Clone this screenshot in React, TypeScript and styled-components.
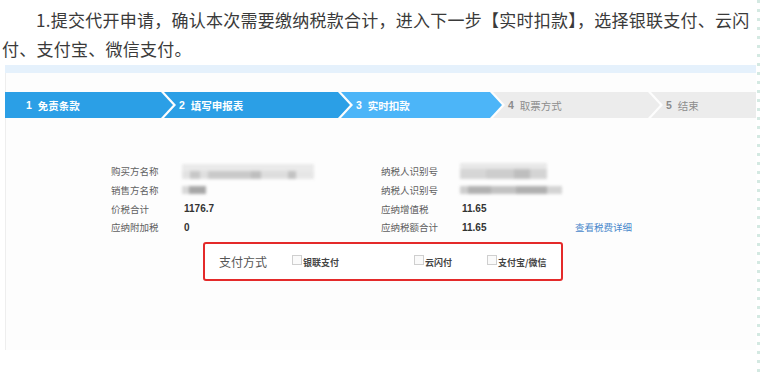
import styled, { createGlobalStyle } from "styled-components";

const GlobalStyle = createGlobalStyle`
  html, body {
    margin: 0;
    padding: 0;
    background: #fff;
  }
  body {
    font-family: "Noto Sans CJK SC", "Noto Sans", sans-serif;
  }
`;

type StepState = "done" | "current" | "todo";

const steps: { no: number; label: string; state: StepState; width?: number }[] = [
  { no: 1, label: "免责条款", state: "done", width: 168 },
  { no: 2, label: "填写申报表", state: "done", width: 186 },
  { no: 3, label: "实时扣款", state: "current", width: 161 },
  { no: 4, label: "取票方式", state: "todo", width: 167 },
  { no: 5, label: "结束", state: "todo" },
];

const App = () => {
  return (
    <Page>
      <GlobalStyle />
      <Article>
        <Lead>
          1.提交代开申请，确认本次需要缴纳税款合计，进入下一步【实时扣款】，选择银联支付、云闪
          <br />
          付、支付宝、微信支付。
        </Lead>
        <Shot>
          <Band />
          <StepBar>
            {steps.map((s, i) => (
              <Step
                key={s.no}
                $state={s.state}
                $width={s.width}
                $first={i === 0}
                $last={i === steps.length - 1}
              >
                <StepNo>{s.no}</StepNo>
                {s.label}
              </Step>
            ))}
          </StepBar>

          <InfoGrid>
            <Label>购买方名称</Label>
            <Value>
              <Redacted
                $w={132}
                $h={15}
                $bg="linear-gradient(#e8e8e8 0 45%, transparent 45%), linear-gradient(90deg, #e0e0e0 0 6%, #c2c2c2 6% 14%, #dcdcdc 14% 20%, #c4c4c4 20% 52%, #b8b8b8 52% 60%, #dadada 60% 80%, #bcbcbc 80% 86%, #e4e4e4 86%)"
              />
            </Value>
            <Label>纳税人识别号</Label>
            <Value>
              <Redacted
                $w={87}
                $h={16}
                $bg="linear-gradient(#e6e6e6 0 40%, transparent 40%), linear-gradient(90deg, #d2d2d2 0 30%, #c8c8c8 30% 62%, #b8b8b8 62% 80%, #d0d0d0 80%)"
              />
            </Value>
            <span />

            <Label>销售方名称</Label>
            <Value>
              <Redacted
                $w={24}
                $h={8}
                $bg="linear-gradient(90deg, #d4d4d4 0 30%, #9e9e9e 30%)"
              />
            </Value>
            <Label>纳税人识别号</Label>
            <Value>
              <Redacted
                $w={102}
                $h={8}
                $bg="linear-gradient(90deg, #c8c8c8 0 8%, #a9a9a9 8% 30%, #bcbcbc 30% 55%, #a8a8a8 55% 85%, #cfcfcf 85%)"
              />
            </Value>
            <span />

            <Label>价税合计</Label>
            <Amount>1176.7</Amount>
            <Label>应纳增值税</Label>
            <Amount>11.65</Amount>
            <span />

            <Label>应纳附加税</Label>
            <Amount>0</Amount>
            <Label>应纳税额合计</Label>
            <Amount>11.65</Amount>
            <DetailLink>查看税费详细</DetailLink>
          </InfoGrid>

          <PayBox>
            <PayTitle>支付方式</PayTitle>
            <Option>
              <Check />
              银联支付
            </Option>
            <Option>
              <Check />
              云闪付
            </Option>
            <Option>
              <Check />
              支付宝/微信
            </Option>
          </PayBox>
        </Shot>
      </Article>
      <EdgeRule />
    </Page>
  );
};

export default App;

const Page = styled.div`
  display: flex;
  width: 762px;
  height: 376px;
  overflow: hidden;
  background: #fff;
`;

const Article = styled.div`
  width: 757px;
  display: flex;
  flex-direction: column;
`;

const Lead = styled.p`
  margin: 0;
  padding: 5px 0 0 2px;
  font-size: 17px;
  line-height: 29px;
  letter-spacing: 0.25px;
  color: #3a3a3a;
  text-indent: 2em;
  white-space: nowrap;
`;

const Shot = styled.div`
  margin: 2px 0 0 5px;
  width: 751px;
  height: 285px;
  background: #fdfdfd;
  box-shadow: inset 1px 0 0 #eeeeee;
  display: flex;
  flex-direction: column;
`;

const Band = styled.div`
  height: 8px;
  background: #e5f1fc;
`;

const StepBar = styled.div`
  margin-top: 19px;
  height: 26px;
  display: flex;
`;

const stepFill: Record<StepState, string> = {
  done: "#2b9fe6",
  current: "#4cb5f8",
  todo: "#ececec",
};

const Step = styled.div<{
  $state: StepState;
  $width?: number;
  $first: boolean;
  $last: boolean;
}>`
  box-sizing: border-box;
  height: 26px;
  ${(p) => (p.$width ? `width: ${p.$width}px; flex: none;` : "flex: 1;")}
  margin-left: ${(p) => (p.$first ? 0 : -9)}px;
  padding-left: ${(p) => (p.$first ? 21 : 15)}px;
  display: flex;
  align-items: center;
  background: ${(p) => stepFill[p.$state]};
  color: ${(p) => (p.$state === "todo" ? "#8c8c8c" : "#fff")};
  font-size: 10.5px;
  font-weight: ${(p) => (p.$state === "todo" ? 400 : 700)};
  clip-path: ${(p) =>
    p.$last
      ? "polygon(0 0, 100% 0, 100% 100%, 0 100%, 12px 50%)"
      : p.$first
      ? "polygon(0 0, calc(100% - 12px) 0, 100% 50%, calc(100% - 12px) 100%, 0 100%)"
      : "polygon(0 0, calc(100% - 12px) 0, 100% 50%, calc(100% - 12px) 100%, 0 100%, 12px 50%)"};
`;

const StepNo = styled.span`
  font-family: "Liberation Sans", Arial, sans-serif;
  font-weight: 700;
  margin-right: 6px;
`;

const InfoGrid = styled.div`
  margin: 44px 0 0 106px;
  display: grid;
  grid-template-columns: 71px 199px 79px 115px auto;
  grid-auto-rows: 18.67px;
  align-items: center;
  font-size: 9.5px;
`;

const Label = styled.span`
  color: #606060;
`;

const Value = styled.span`
  display: flex;
  align-items: center;
`;

const Redacted = styled.span<{ $w: number; $h: number; $bg: string }>`
  display: block;
  width: ${(p) => p.$w}px;
  height: ${(p) => p.$h}px;
  background: ${(p) => p.$bg};
  filter: blur(1.6px);
  opacity: 0.9;
`;

const Amount = styled.span`
  font-family: "Liberation Sans", Arial, sans-serif;
  font-weight: 700;
  font-size: 10px;
  color: #333;
  padding-left: 2px;
`;

const DetailLink = styled.span`
  color: #4a88cc;
  cursor: pointer;
`;

const PayBox = styled.div`
  box-sizing: border-box;
  margin: 5px 0 0 198px;
  width: 360px;
  height: 39px;
  border: 2px solid #e42a2a;
  border-radius: 3px;
  padding-left: 14px;
  display: grid;
  grid-template-columns: 73px 122px 73px auto;
  align-items: center;
  background: #fff;
`;

const PayTitle = styled.span`
  font-size: 12px;
  color: #555;
`;

const Option = styled.label`
  display: flex;
  align-items: center;
  font-size: 9px;
  font-weight: 700;
  color: #444;
  padding-top: 3px;
`;

const Check = styled.span`
  box-sizing: border-box;
  width: 10px;
  height: 10px;
  border: 1px solid #cfcfcf;
  background: #fafafa;
  margin-bottom: 6px;
  margin-right: 1px;
`;

const EdgeRule = styled.div`
  width: 3px;
  height: 100%;
  background: repeating-linear-gradient(
    to bottom,
    #d4e9e2 0 3px,
    transparent 3px 9px
  );
`;
